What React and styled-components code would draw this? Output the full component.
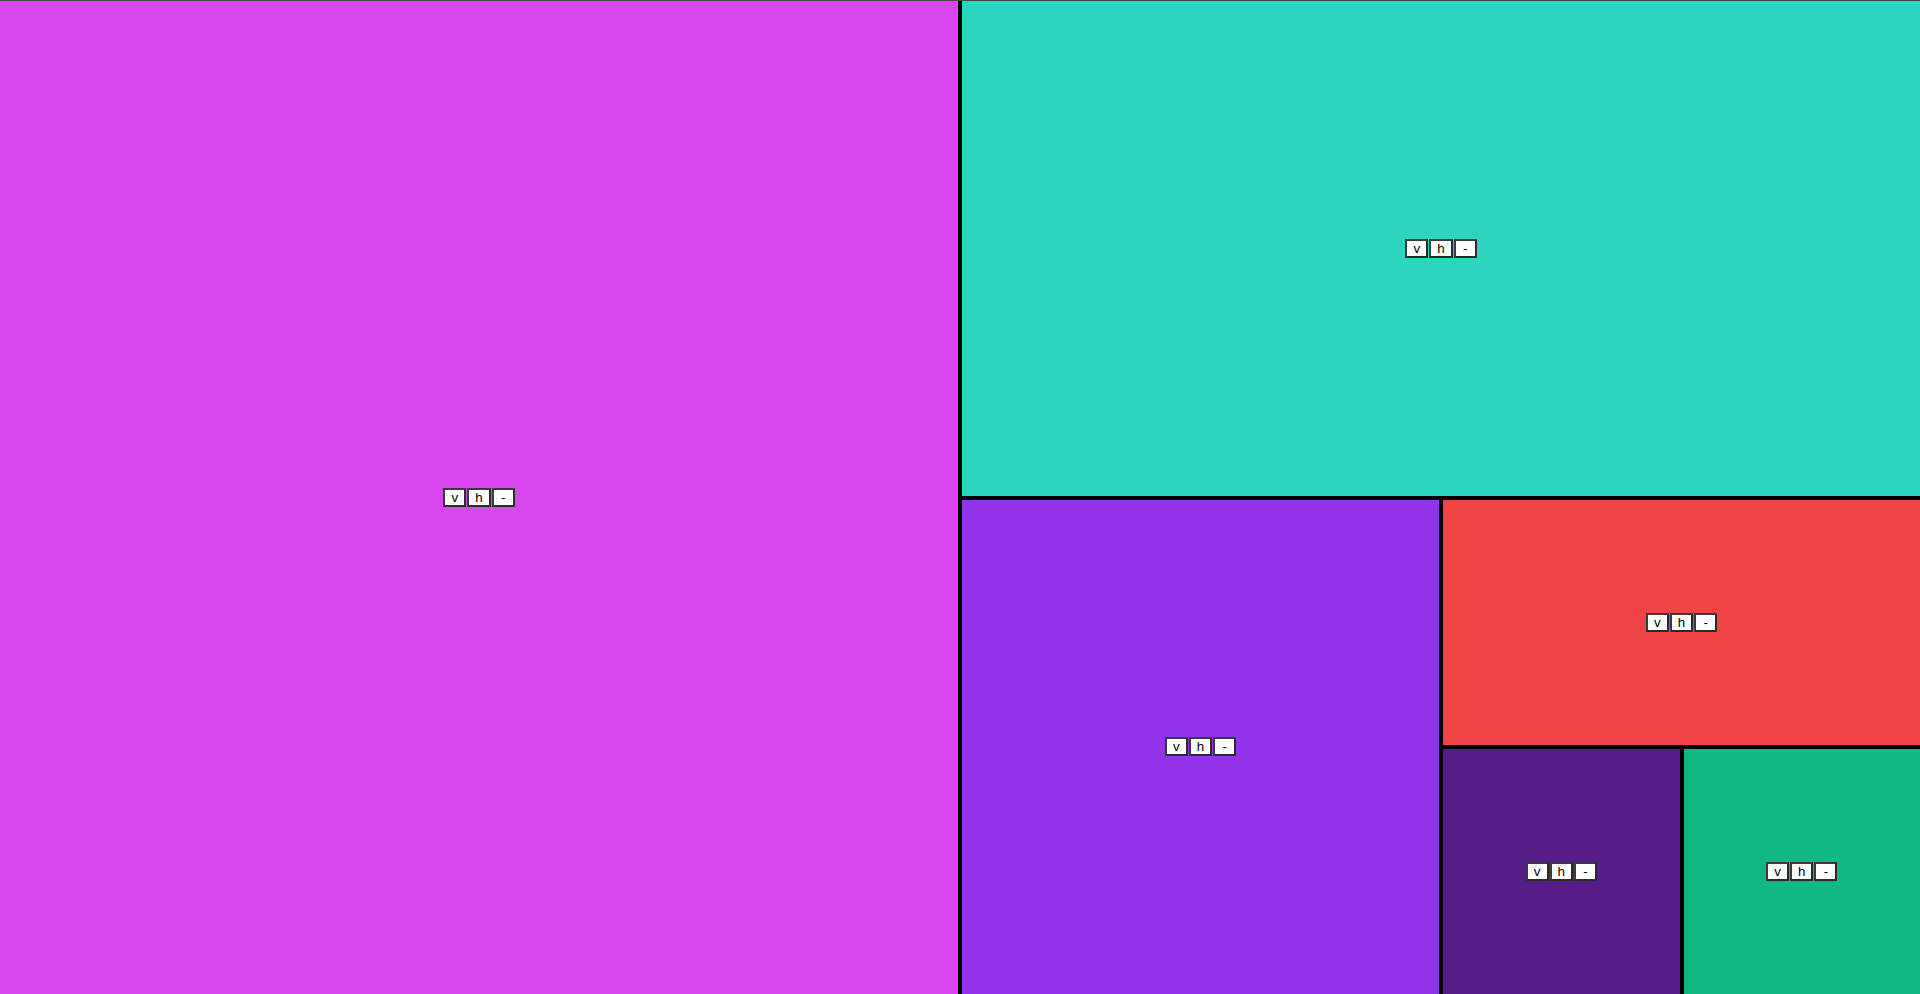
import React from "react";
import styled, { createGlobalStyle } from "styled-components";

const GlobalStyle = createGlobalStyle`
  html, body {
    margin: 0;
    padding: 0;
    height: 100%;
    overflow: hidden;
  }
  #root {
    height: 100%;
  }
`;

const Screen = styled.div`
  height: 100vh;
  box-sizing: border-box;
  border-top: 1px solid #454545;
  display: flex;
  background: #000;
`;

const Split = styled.div`
  flex: 1 1 0;
  min-width: 0;
  min-height: 0;
  display: flex;
  flex-direction: ${(p) => (p.dir === "v" ? "row" : "column")};
  gap: 4px;
  background: #000;
`;

const Pane = styled.div`
  flex: 1 1 0;
  min-width: 0;
  min-height: 0;
  background: ${(p) => p.color};
  display: flex;
  align-items: center;
  justify-content: center;
`;

const Controls = styled.div`
  display: flex;
`;

const CtrlButton = styled.button`
  font-family: "Liberation Sans", Arial, sans-serif;
  font-size: 13.33px;
  line-height: 15px;
  padding: 0 6px;
  margin: 0 0.5px;
  background: #fff;
  color: #000;
  border: 2px solid #3a3a3a;
  border-right-color: #2a2a2a;
  border-bottom-color: #2a2a2a;
  border-radius: 0;
  min-width: 23px;
  cursor: pointer;
`;

function Leaf({ color }) {
  return (
    <Pane color={color}>
      <Controls>
        <CtrlButton>v</CtrlButton>
        <CtrlButton>h</CtrlButton>
        <CtrlButton>-</CtrlButton>
      </Controls>
    </Pane>
  );
}

export default function App() {
  return (
    <>
      <GlobalStyle />
      <Screen>
        <Split dir="v">
          <Leaf color="#d946ef" />
          <Split dir="h">
            <Leaf color="#2dd4bf" />
            <Split dir="v">
              <Leaf color="#9333ea" />
              <Split dir="h">
                <Leaf color="#ef4444" />
                <Split dir="v">
                  <Leaf color="#581c87" />
                  <Leaf color="#10b981" />
                </Split>
              </Split>
            </Split>
          </Split>
        </Split>
      </Screen>
    </>
  );
}
